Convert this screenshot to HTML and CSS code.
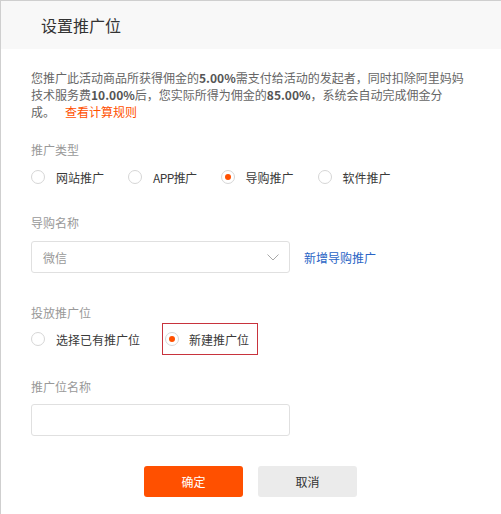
FILE: index.html
```html
<!DOCTYPE html>
<html lang="zh-CN">
<head>
<meta charset="utf-8">
<title>设置推广位</title>
<link rel="stylesheet" href="styles.css">
</head>
<body>
<div class="dialog">
  <div class="dialog-header">设置推广位</div>
  <div class="dialog-body">
    <p class="desc">您推广此活动商品所获得佣金的<b>5.00%</b>需支付给活动的发起者，同时扣除阿里妈妈<br>技术服务费<b>10.00%</b>后，您实际所得为佣金的<b>85.00%</b>，系统会自动完成佣金分<br>成。<a class="rule-link" href="#">查看计算规则</a></p>

    <div class="field field-type">
      <div class="field-label">推广类型</div>
      <div class="radio-group">
        <label class="radio"><span class="radio-dot"></span><span class="radio-text">网站推广</span></label>
        <label class="radio"><span class="radio-dot"></span><span class="radio-text radio-text-latin">APP推广</span></label>
        <label class="radio"><span class="radio-dot checked"></span><span class="radio-text">导购推广</span></label>
        <label class="radio"><span class="radio-dot"></span><span class="radio-text">软件推广</span></label>
      </div>
    </div>

    <div class="field field-guide">
      <div class="field-label">导购名称</div>
      <div class="select-row">
        <div class="select">
          <span class="select-value">微信</span>
          <svg class="chevron" width="12" height="7" viewBox="0 0 12 7"><path d="M0.5 0.5 L6 6 L11.5 0.5" fill="none" stroke="#a8a8a8" stroke-width="1"/></svg>
        </div>
        <a class="add-link" href="#">新增导购推广</a>
      </div>
    </div>

    <div class="field field-place">
      <div class="field-label">投放推广位</div>
      <div class="radio-group radio-group-place">
        <label class="radio"><span class="radio-dot"></span><span class="radio-text">选择已有推广位</span></label>
        <label class="radio radio-boxed"><span class="radio-dot checked"></span><span class="radio-text">新建推广位</span></label>
      </div>
    </div>

    <div class="field field-name">
      <div class="field-label">推广位名称</div>
      <div class="text-input"></div>
    </div>

    <div class="actions">
      <button class="btn btn-primary">确定</button>
      <button class="btn btn-default">取消</button>
    </div>
  </div>
</div>
</body>
</html>
```
FILE: styles.css
```css
html, body {
  margin: 0;
  padding: 0;
  background: #fff;
}
body {
  font-family: "Noto Sans CJK SC", "Microsoft YaHei", sans-serif;
  font-size: 12px;
  color: #666;
}
.dialog {
  width: 501px;
  height: 514px;
  box-sizing: border-box;
  border-top: 1px solid #cfcfcf;
  border-left: 1px solid #cfcfcf;
}
.dialog-header {
  height: 48px;
  line-height: 48px;
  background: #f8f8f8;
  padding-left: 40px;
  font-size: 16px;
  color: #333;
}
.dialog-body {
  padding-left: 30px;
}
.desc {
  margin: 20px 0 0 0;
  line-height: 17px;
  color: #666;
}
.desc b {
  font-weight: bold;
  color: #555;
}
.rule-link {
  color: #ff5000;
  text-decoration: none;
  margin-left: 10px;
}
.field-label {
  line-height: 17px;
  color: #999;
}
.field-type { margin-top: 21px; }
.field-guide { margin-top: 27px; }
.field-place { margin-top: 31px; }
.field-name { margin-top: 23px; }

.radio-group {
  display: flex;
  align-items: center;
  margin-top: 9px;
  height: 20px;
}
.radio {
  display: flex;
  align-items: center;
  margin-right: 24px;
  color: #3a3a3a;
}
.radio-dot {
  width: 12px;
  height: 12px;
  border: 1px solid #d6d6d6;
  border-radius: 50%;
  box-sizing: content-box;
  display: flex;
  align-items: center;
  justify-content: center;
  background: #fff;
}
.radio-dot.checked::after {
  content: "";
  width: 6px;
  height: 6px;
  border-radius: 50%;
  background: #ff5000;
}
.radio-text {
  margin-left: 11px;
  line-height: 17px;
}
.radio-text-latin {
  letter-spacing: -0.6px;
}
.radio-group-place {
  margin-top: 2px;
  height: 32px;
}
.radio-group-place .radio {
  margin-right: 22px;
}
.radio-boxed {
  height: 30px;
  border: 1px solid #c8333d;
  padding: 0 8px 0 2px;
}
.radio-boxed .radio-text {
  margin-left: 10px;
}

.select-row {
  display: flex;
  align-items: center;
  margin-top: 10px;
}
.select {
  width: 259px;
  height: 32px;
  box-sizing: border-box;
  border: 1px solid #e0e0e0;
  border-radius: 3px;
  display: flex;
  align-items: center;
  justify-content: space-between;
  padding: 0 10px 0 11px;
}
.select-value {
  color: #999;
}
.add-link {
  margin-left: 14px;
  color: #2a64c5;
  text-decoration: none;
}
.text-input {
  margin-top: 9px;
  width: 259px;
  height: 32px;
  box-sizing: border-box;
  border: 1px solid #e0e0e0;
  border-radius: 3px;
}
.actions {
  display: flex;
  margin-top: 30px;
  padding-left: 113px;
  gap: 15px;
}
.btn {
  width: 99px;
  height: 31px;
  border: none;
  border-radius: 3px;
  font-family: "Noto Sans CJK SC", "Microsoft YaHei", sans-serif;
  font-size: 12px;
  padding: 0;
}
.btn-primary {
  background: #ff5000;
  color: #fff;
}
.btn-default {
  background: #ebebeb;
  color: #333;
}
```
